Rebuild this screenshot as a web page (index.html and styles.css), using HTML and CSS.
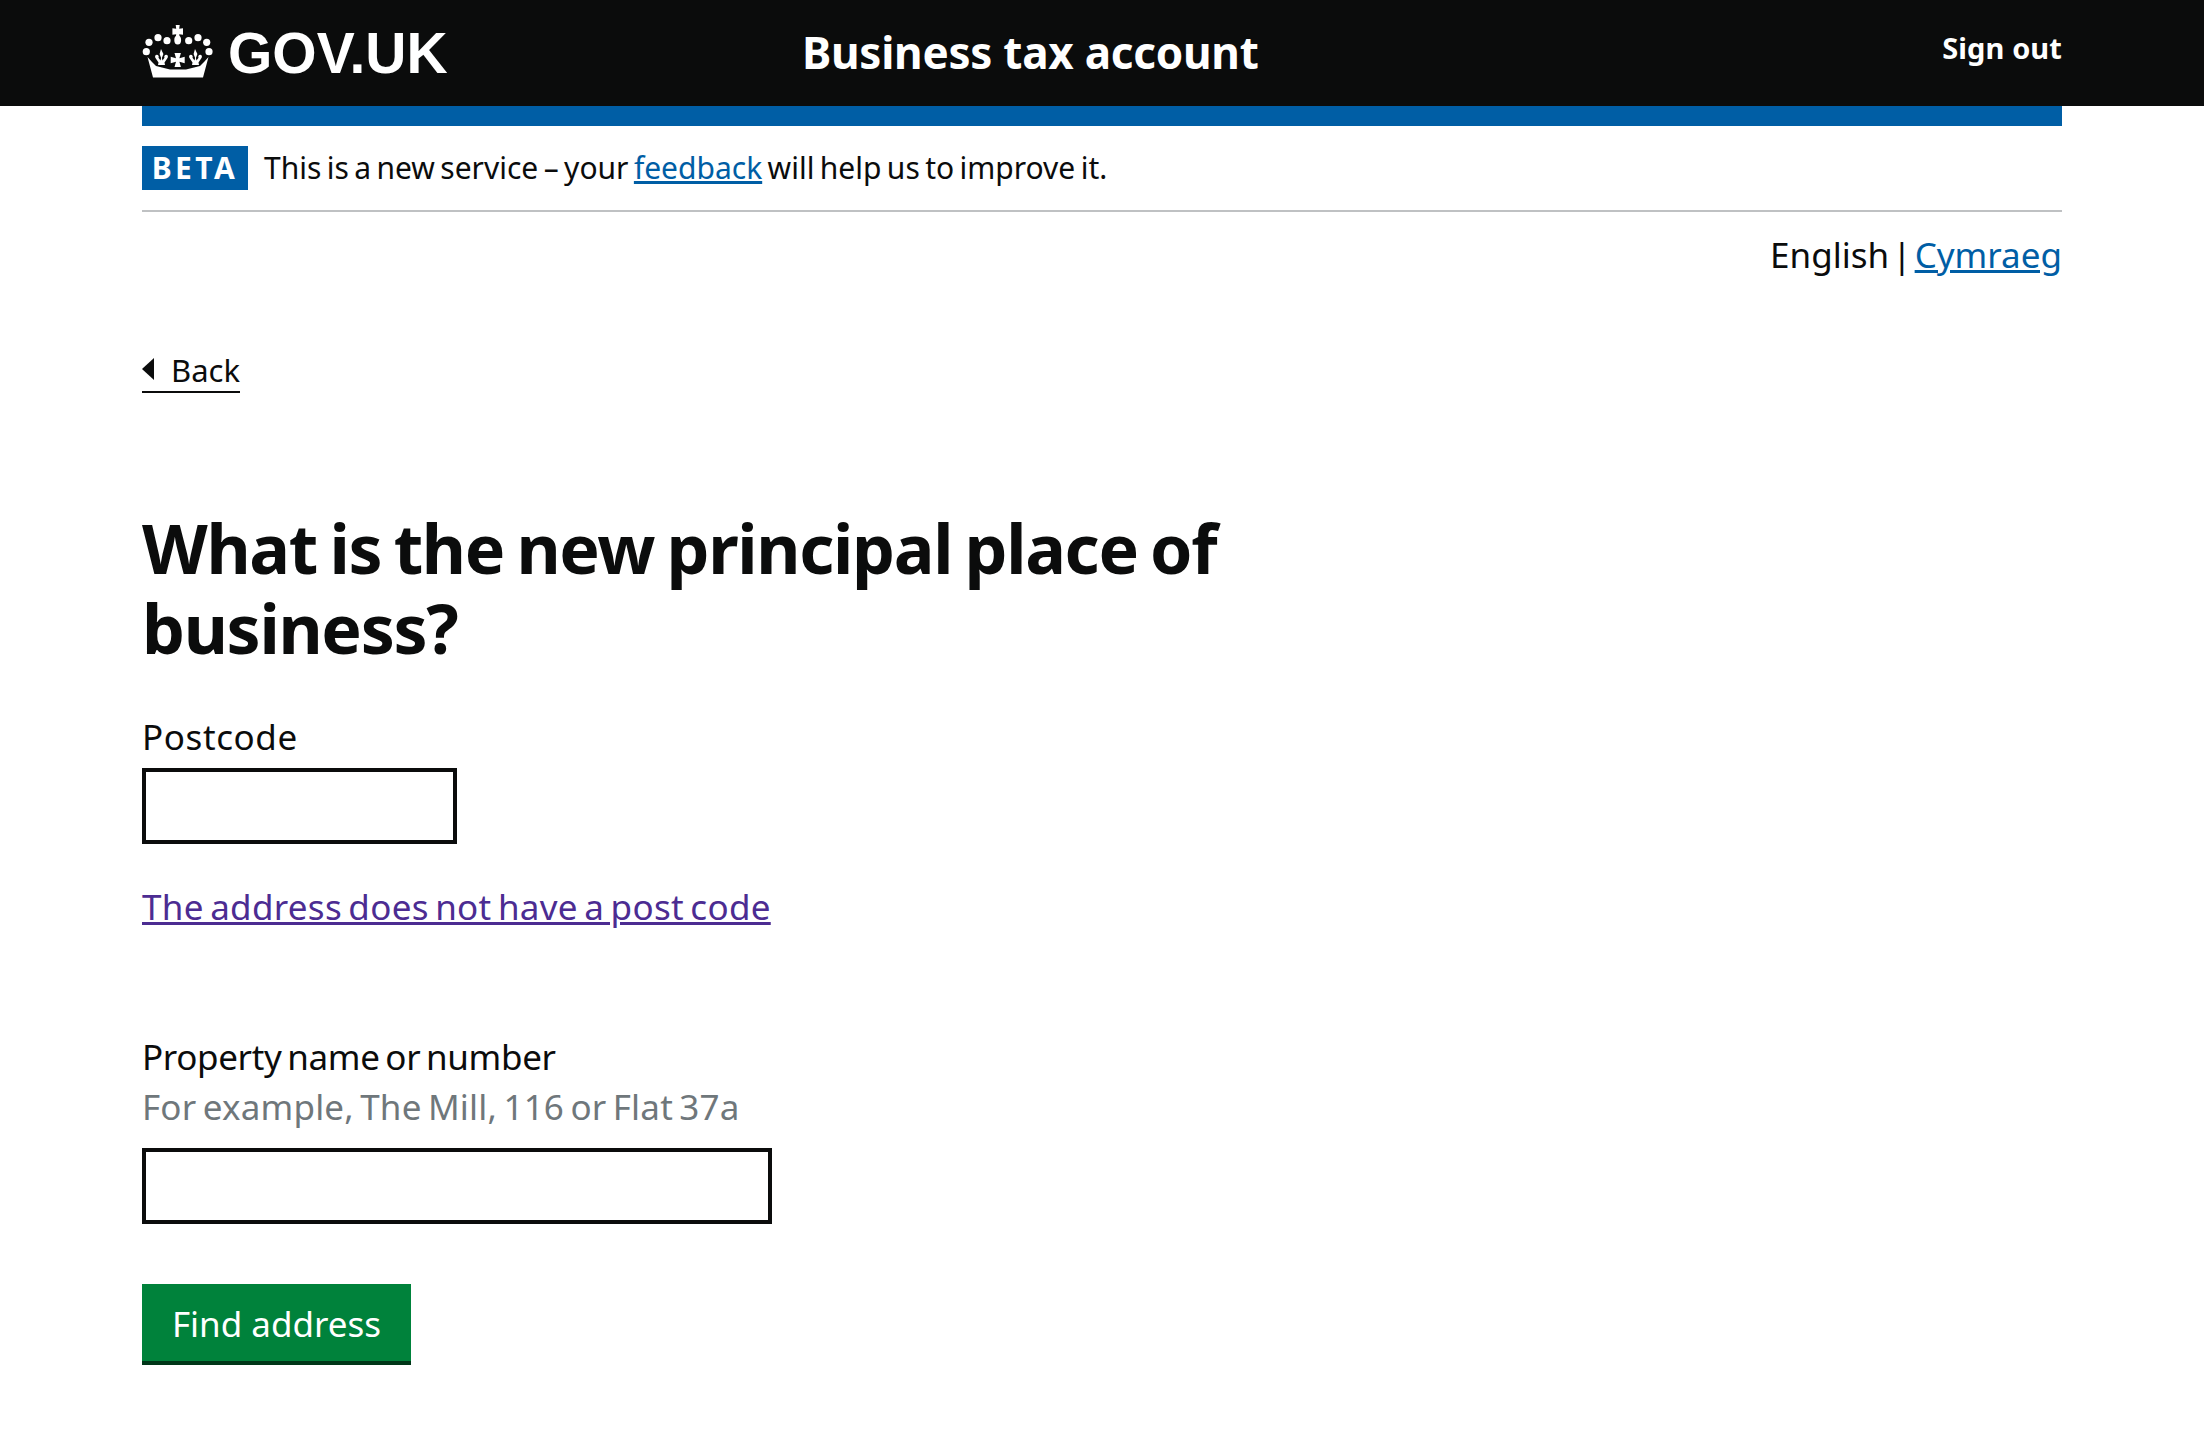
FILE: index.html
```html
<!DOCTYPE html>
<html lang="en">
<head>
<meta charset="utf-8">
<title>Business tax account</title>
<link rel="stylesheet" href="styles.css">
</head>
<body>
<header class="site-header">
  <div class="header-inner">
    <a class="logo" href="#">
      <svg class="crown" viewBox="0 0 80 60" aria-hidden="true">
        <g fill="#fff">
          <path d="M37.700 5h4l-.5 3.700 3.800-.5v6.500l-3.800-.5.500 3.500h-4l.5-3.500-3.800.5V8.200l3.800.5z"/>
          <ellipse cx="39.700" cy="20" rx="3.400" ry="4.600"/>
          <circle cx="11" cy="22.300" r="3.600"/><circle cx="20" cy="17.700" r="3.600"/><circle cx="29" cy="20.700" r="3.600"/>
          <circle cx="50.700" cy="20.700" r="3.600"/><circle cx="60" cy="17.700" r="3.600"/><circle cx="68.700" cy="22.300" r="3.600"/>
          <circle cx="8.300" cy="31.700" r="3.600"/><circle cx="71" cy="31.700" r="3.600"/>
          <path d="M23 29l2.400 5-1.500 4 .6 2.500 2-2.800c-.8-1.500.2-3 1.600-3 1.600 0 2.400 1.800 1.400 3.300l-3 4.500.5 2.500h-7l.5-2.500-3-4.500c-1-1.500-.2-3.300 1.400-3.300 1.400 0 2.400 1.500 1.600 3l2 2.800.6-2.500-1.500-4z"/>
          <path d="M57 29l2.400 5-1.500 4 .6 2.500 2-2.800c-.8-1.500.2-3 1.600-3 1.600 0 2.400 1.800 1.400 3.300l-3 4.500.5 2.500h-7l.5-2.500-3-4.500c-1-1.500-.2-3.300 1.400-3.300 1.400 0 2.400 1.500 1.600 3l2 2.800.6-2.500-1.500-4z"/>
          <path d="M36.500 33h6.400l-1.500 5.300 5.300-1.500v6.400l-5.300-1.500 1.500 5.300h-6.400l1.500-5.300-5.300 1.500v-6.400l5.300 1.500z"/>
          <path d="M9.500 37l4.500 5 4 4 6 1.500 8 2h16l8-2 6-1.500 4-4 4.500-5-5.500 20.500H15z"/>
        </g>
      </svg>
      <span class="logo-text">GOV.UK</span>
    </a>
    <a class="service-name" href="#">Business tax account</a>
    <a class="sign-out" href="#">Sign out</a>
  </div>
</header>

<div class="page">
  <div class="blue-bar"></div>
  <div class="phase-banner">
    <strong class="phase-tag">BETA</strong>
    <span>This is a new service – your <a href="#" class="link">feedback</a> will help us to improve it.</span>
  </div>
  <div class="language">English | <a href="#" class="link">Cymraeg</a></div>
  <a class="back" href="#"><span class="back-arrow"></span>Back</a>

  <main class="content">
    <h1 class="heading">What is the new principal place of business?</h1>
    <form class="form">
      <label class="label label-postcode" for="postcode">Postcode</label>
      <input class="input input-short" id="postcode" type="text">
      <a href="#" class="visited-link">The address does not have a post code</a>
      <label class="label label-property" for="property">Property name or number</label>
      <span class="hint">For example, The Mill, 116 or Flat 37a</span>
      <input class="input input-long" id="property" type="text">
      <button class="button" type="button">Find address</button>
    </form>
  </main>
</div>
</body>
</html>
```
FILE: styles.css
```css
* { box-sizing: border-box; }
html, body { margin: 0; padding: 0; }
body {
  background: #fff;
  color: #0b0c0c;
  font-family: "Noto Sans", "Open Sans", sans-serif;
  font-size: 30px;
  height: 1437px;
  overflow: hidden;
}
.site-header { background: #0b0c0c; height: 106px; }
.header-inner {
  width: 1920px;
  margin: 0 auto;
  height: 106px;
  display: flex;
  align-items: flex-start;
}
.logo {
  display: flex;
  align-items: center;
  color: #fff;
  text-decoration: none;
  width: 660px;
  height: 106px;
}
.crown { width: 80px; height: 60px; flex: none; margin-top: -6px; margin-left: -4px; margin-right: 10px; }
.logo-text {
  font-family: "Liberation Sans", Arial, sans-serif;
  font-weight: 700;
  font-size: 57px;
  line-height: 106px;
}
.service-name {
  color: #fff;
  text-decoration: none;
  font-weight: 700;
  font-size: 44px;
  line-height: 104px;
  letter-spacing: -0.250px;
}
.sign-out {
  margin-left: auto;
  color: #fff;
  text-decoration: none;
  font-weight: 700;
  font-size: 29px;
  line-height: 96px;
  letter-spacing: 0.100px;
}
.page { width: 1920px; margin: 0 auto; }
.blue-bar { height: 20px; background: #005ea5; }
.phase-banner {
  height: 86px;
  padding-top: 20px;
  display: flex;
  align-items: flex-start;
  gap: 16px;
  border-bottom: 2px solid #bfc1c3;
  font-size: 30px;
  line-height: 44px;
  word-spacing: -2.400px;
}
.phase-tag {
  background: #005ea5;
  color: #fff;
  font-weight: 700;
  font-size: 30px;
  letter-spacing: 3.500px;
  width: 106px;
  height: 44px;
  text-align: center;
}
.link { color: #005ea5; text-decoration: underline; }
.language {
  text-align: right;
  font-size: 35px;
  line-height: 48px;
  margin-top: 19px;
  word-spacing: -6px;
}
.back {
  display: inline-flex;
  align-items: center;
  margin-top: 70px;
  height: 44px;
  color: #0b0c0c;
  text-decoration: none;
  font-size: 31px;
  line-height: 40px;
  border-bottom: 2px solid #0b0c0c;
}
.back-arrow {
  width: 0;
  height: 0;
  border-style: solid;
  border-width: 11px 12px 11px 0;
  border-color: transparent #0b0c0c transparent transparent;
  margin-right: 17px;
  margin-bottom: 2px;
}
.content { margin-top: 115px; }
.heading {
  margin: 0;
  width: 1120px;
  font-size: 68px;
  font-weight: 700;
  line-height: 80px;
  letter-spacing: -1.300px;
  word-spacing: -4px;
}
.form { display: flex; flex-direction: column; align-items: flex-start; margin-top: 45px; }
.label, .visited-link, .hint { font-size: 35px; line-height: 48px; word-spacing: -3px; }
.label-postcode { letter-spacing: 0.600px; }
.input {
  border: 4px solid #0b0c0c;
  background: #fff;
  height: 76px;
  display: block;
  border-radius: 0;
  outline: none;
}
.input-short { width: 315px; margin-top: 7px; }
.input-long { width: 630px; margin-top: 17px; }
.visited-link { color: #4c2c92; margin-top: 39px; text-decoration: underline; letter-spacing: 0.300px; }
.label-property { margin-top: 102px; letter-spacing: -0.350px; }
.hint { color: #6f777b; margin-top: 2px; letter-spacing: 0.200px; }
.button {
  margin-top: 60px;
  width: 269px;
  height: 81px;
  border: 0;
  background: #00823b;
  box-shadow: inset 0 -4px 0 #003618;
  color: #fff;
  font-family: "Noto Sans", sans-serif;
  font-size: 35px;
  padding: 0 0 2px;
}
```
